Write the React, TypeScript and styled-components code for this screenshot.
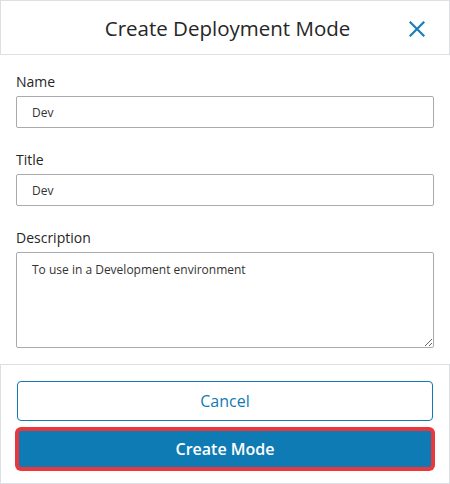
import * as React from "react";
import styled, { createGlobalStyle } from "styled-components";

// ================================================================================
//  Globals
// ================================================================================

const GlobalStyle = createGlobalStyle`
  html, body {
    margin: 0;
    padding: 0;
    background: #ffffff;
  }
  body {
    font-family: "Open Sans", "Noto Sans", sans-serif;
    color: #333333;
  }
  * {
    box-sizing: border-box;
  }
`;

// ================================================================================
//  The styled components
// ================================================================================

const Dialog = styled.div`
  width: 450px;
  height: 484px;
  display: flex;
  flex-direction: column;
  background: #ffffff;
`;

const Header = styled.header`
  height: 55px;
  border: 1px solid #dcdfe3;
  display: flex;
  align-items: center;
  justify-content: center;
  position: relative;
`;

const HeaderTitle = styled.h1`
  margin: 0 0 0 5px;
  font-size: 20.5px;
  font-weight: 400;
  color: #262626;
  line-height: 26px;
`;

/** The close icon lies over the header's right end */
const CloseButton = styled.button`
  position: absolute;
  right: 22px;
  top: 18px;
  width: 20px;
  height: 20px;
  padding: 0;
  border: 0;
  background: transparent;
  display: flex;
  align-items: center;
  justify-content: center;
  cursor: pointer;
`;

const Body = styled.div`
  padding: 17px 16px 16px 16px;
  display: flex;
  flex-direction: column;
  gap: 22px;
`;

const Field = styled.div`
  display: flex;
  flex-direction: column;
  gap: 4px;
`;

const Label = styled.label`
  font-size: 14px;
  line-height: 20px;
  color: #262626;
`;

const TextInput = styled.input`
  height: 32px;
  width: 100%;
  border: 1px solid #a9abae;
  border-radius: 2px;
  padding: 0 15px;
  font-family: "Open Sans", "Noto Sans", sans-serif;
  font-size: 12px;
  color: #333333;
  outline: none;
`;

const TextArea = styled.textarea`
  height: 96px;
  width: 100%;
  border: 1px solid #a9abae;
  border-radius: 2px;
  padding: 8px 15px;
  font-family: "Open Sans", "Noto Sans", sans-serif;
  font-size: 12px;
  line-height: 17px;
  color: #333333;
  resize: vertical;
  outline: none;
`;

const Footer = styled.footer`
  flex: 1;
  border: 1px solid #dcdfe3;
  padding: 16px 16px 0 16px;
  display: flex;
  flex-direction: column;
  gap: 8px;
`;

const Button = styled.button<{ $primary?: boolean }>`
  height: 40px;
  width: 100%;
  border-radius: 4px;
  font-family: "Open Sans", "Noto Sans", sans-serif;
  font-size: 16px;
  cursor: pointer;
  border: ${(p) => (p.$primary ? "2px solid #e8383d" : "1px solid #1279b5")};
  background: ${(p) => (p.$primary ? "#0f7bb4" : "#ffffff")};
  color: ${(p) => (p.$primary ? "#ffffff" : "#1279b5")};
  font-weight: ${(p) => (p.$primary ? 600 : 400)};
  box-shadow: ${(p) => (p.$primary ? "0 0 0 2px #e8383d" : "none")};
`;

// ================================================================================
//  Helper Components
// ================================================================================

const CloseIcon = () => (
  <svg width="16" height="16" viewBox="0 0 16 16" fill="none">
    <path
      d="M1.5 1.5 L14.5 14.5 M14.5 1.5 L1.5 14.5"
      stroke="#1a7dbd"
      strokeWidth="2.2"
      strokeLinecap="square"
    />
  </svg>
);

// ================================================================================
//  The main component
// ================================================================================

export default function App() {
  return (
    <>
      <GlobalStyle />
      <Dialog>
        <Header>
          <HeaderTitle>Create Deployment Mode</HeaderTitle>
          <CloseButton aria-label="Close">
            <CloseIcon />
          </CloseButton>
        </Header>
        <Body>
          <Field>
            <Label>Name</Label>
            <TextInput defaultValue="Dev" />
          </Field>
          <Field>
            <Label>Title</Label>
            <TextInput defaultValue="Dev" />
          </Field>
          <Field>
            <Label>Description</Label>
            <TextArea defaultValue="To use in a Development environment" />
          </Field>
        </Body>
        <Footer>
          <Button>Cancel</Button>
          <Button $primary>Create Mode</Button>
        </Footer>
      </Dialog>
    </>
  );
}
